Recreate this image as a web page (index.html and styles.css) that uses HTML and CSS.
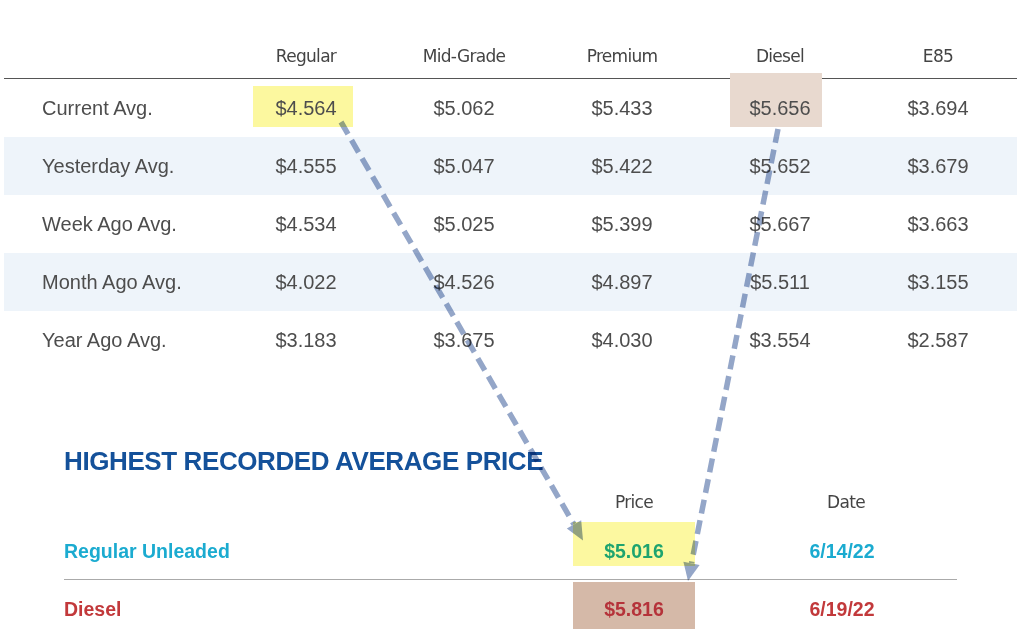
FILE: index.html
```html
<!DOCTYPE html>
<html>
<head>
<meta charset="utf-8">
<link rel="stylesheet" href="styles.css">
</head>
<body>
<div class="page">
  <div class="prices">
    <div class="row head">
      <div class="lab"></div>
      <div class="col">Regular</div>
      <div class="col">Mid-Grade</div>
      <div class="col">Premium</div>
      <div class="col">Diesel</div>
      <div class="col">E85</div>
    </div>
    <div class="row">
      <div class="lab">Current Avg.</div>
      <div class="cell"><span class="hl hl-reg">$4.564</span></div>
      <div class="cell">$5.062</div>
      <div class="cell">$5.433</div>
      <div class="cell"><span class="hl hl-dsl">$5.656</span></div>
      <div class="cell">$3.694</div>
    </div>
    <div class="row alt">
      <div class="lab">Yesterday Avg.</div>
      <div class="cell">$4.555</div>
      <div class="cell">$5.047</div>
      <div class="cell">$5.422</div>
      <div class="cell">$5.652</div>
      <div class="cell">$3.679</div>
    </div>
    <div class="row">
      <div class="lab">Week Ago Avg.</div>
      <div class="cell">$4.534</div>
      <div class="cell">$5.025</div>
      <div class="cell">$5.399</div>
      <div class="cell">$5.667</div>
      <div class="cell">$3.663</div>
    </div>
    <div class="row alt">
      <div class="lab">Month Ago Avg.</div>
      <div class="cell">$4.022</div>
      <div class="cell">$4.526</div>
      <div class="cell">$4.897</div>
      <div class="cell">$5.511</div>
      <div class="cell">$3.155</div>
    </div>
    <div class="row">
      <div class="lab">Year Ago Avg.</div>
      <div class="cell">$3.183</div>
      <div class="cell">$3.675</div>
      <div class="cell">$4.030</div>
      <div class="cell">$3.554</div>
      <div class="cell">$2.587</div>
    </div>
  </div>

  <div class="record">
    <h2 class="title">HIGHEST RECORDED AVERAGE PRICE</h2>
    <div class="rhead">
      <div></div>
      <div class="rh">Price</div>
      <div class="rh date">Date</div>
    </div>
    <div class="rrow reg">
      <div class="rl">Regular Unleaded</div>
      <div class="rp">$5.016</div>
      <div class="rd">6/14/22</div>
    </div>
    <div class="rrow dsl">
      <div class="rl">Diesel</div>
      <div class="rp">$5.816</div>
      <div class="rd">6/19/22</div>
    </div>
  </div>

  <svg class="arrows" width="1021" height="636" viewBox="0 0 1021 636">
    <g class="arrow">
      <line x1="341" y1="122" x2="574" y2="524.4" />
      <polygon points="583,540.5 566.8,528.6 581.2,520.2" />
    </g>
    <g class="arrow">
      <line x1="778" y1="129" x2="691.5" y2="563.3" />
      <polygon points="688,581 683.4,561.7 699.6,564.9" />
    </g>
  </svg>
</div>
</body>
</html>
```

FILE: styles.css
```css
* { box-sizing: border-box; }
html, body { margin: 0; padding: 0; background: #fff; }
body { width: 1021px; height: 636px; overflow: hidden; }

.page {
  position: relative;
  width: 1021px;
  height: 636px;
  font-family: "Liberation Sans", Arial, sans-serif;
  color: #4d4d4d;
}

.prices {
  margin: 0 4px;
  width: 1013px;
}

.row {
  display: grid;
  grid-template-columns: 223px repeat(5, 158px);
  height: 58px;
  font-size: 20px;
  line-height: 24px;
}
.row.alt { background: #eef4fa; }

.row.head {
  height: 79px;
  align-items: end;
  padding-bottom: 12px;
  border-bottom: 1px solid #555;
  font-family: "DejaVu Sans", sans-serif;
  font-size: 17px;
  line-height: 20px;
  letter-spacing: -0.7px;
  color: #444;
}
.row.head .col { text-align: center; }

.lab {
  padding-left: 38px;
  padding-top: 17px;
}
.row.head .lab { padding: 0; }

.cell {
  display: flex;
  justify-content: center;
  align-items: flex-start;
  padding-top: 17px;
}

.hl { display: inline-block; }
.hl-reg {
  background: #fcf89f;
  padding: 10px 16px 7px 22px;
  margin: -10px -16px -7px -22px;
}
.hl-dsl {
  background: #e8d9cf;
  padding: 23px 11px 7px 19px;
  margin: -23px -11px -7px -19px;
}

.record {
  margin: 77px 0 0 64px;
  width: 893px;
}

.title {
  margin: 0;
  font-size: 26px;
  line-height: 30px;
  font-weight: bold;
  letter-spacing: -0.4px;
  color: #14519a;
}

.rhead {
  display: grid;
  grid-template-columns: 509px 122px 262px;
  margin-top: 16px;
  font-family: "DejaVu Sans", sans-serif;
  font-size: 17px;
  line-height: 20px;
  letter-spacing: -0.7px;
  color: #444;
}
.rh { text-align: center; }
.rh.date { padding-left: 40px; }

.rrow {
  display: grid;
  grid-template-columns: 509px 122px 262px;
  height: 58px;
  font-size: 19.5px;
  line-height: 22px;
  font-weight: bold;
}
.rrow.reg {
  margin-top: 10px;
  border-bottom: 1px solid #aaaaaa;
  color: #1babd0;
}
.rrow.dsl {
  color: #c2393b;
}

.rl, .rd { padding-top: 18px; }
.rd { text-align: center; padding-left: 32px; }

.rp {
  text-align: center;
  padding-top: 18px;
  height: 44px;
}
.reg .rp { background: #fcf8a0; color: #1ea46f; }
.dsl .rp {
  margin-top: 2px;
  padding-top: 16px;
  height: 47px;
  background: #d5b9a8;
  color: #b5333a;
}

.arrows {
  position: absolute;
  top: 0;
  left: 0;
  pointer-events: none;
  mix-blend-mode: multiply;
}
.arrow line {
  stroke: #94a6c8;
  stroke-width: 5.5;
  stroke-dasharray: 14 7;
}
.arrow polygon { fill: #94a6c8; }
```
